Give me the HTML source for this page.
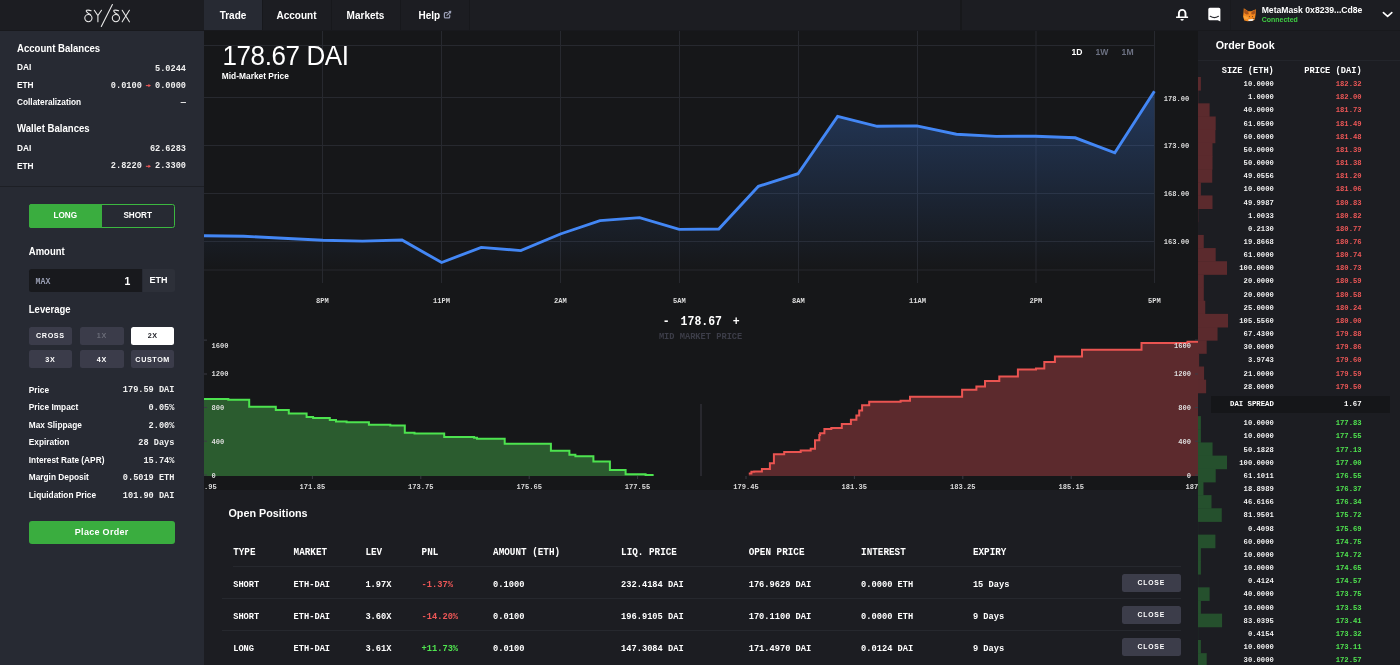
<!DOCTYPE html><html><head><meta charset="utf-8"><style>
html,body{margin:0;padding:0;width:1400px;height:665px;overflow:hidden;background:#18191c;}
.t{position:absolute;white-space:nowrap;line-height:1;}
#tx{position:absolute;left:0;top:0;width:1400px;height:665px;will-change:transform;}
.r{position:absolute;}
svg{position:absolute;left:0;top:0;}
</style></head><body>
<div class="r" style="left:0px;top:0px;width:1400px;height:30px;background:#1c1d22;"></div>
<div class="r" style="left:0px;top:30px;width:1400px;height:1px;background:#18191d;"></div>
<div class="r" style="left:204px;top:0px;width:58px;height:30px;background:#272a33;"></div>
<div class="r" style="left:262px;top:0px;width:1px;height:30px;background:#17181c;"></div>
<div class="r" style="left:331px;top:0px;width:1px;height:30px;background:#17181c;"></div>
<div class="r" style="left:400px;top:0px;width:1px;height:30px;background:#17181c;"></div>
<div class="r" style="left:469px;top:0px;width:1px;height:30px;background:#17181c;"></div>
<div class="r" style="left:1230px;top:0px;width:1px;height:30px;background:#191a1e;"></div>
<div class="r" style="left:960px;top:0px;width:2px;height:30px;background:#17181b;"></div>
<div class="r" style="left:0px;top:31px;width:204px;height:634px;background:#272a33;"></div>
<div class="r" style="left:204px;top:31px;width:994px;height:459px;background:#161719;"></div>
<div class="r" style="left:204px;top:490px;width:994px;height:175px;background:#1c1d22;"></div>
<div class="r" style="left:1198px;top:31px;width:202px;height:634px;background:#1c1d22;"></div>
<div class="r" style="left:0px;top:185.5px;width:204px;height:1.5px;background:#1d1f25;"></div>
<svg width="1400" height="665" viewBox="0 0 1400 665">
<defs><linearGradient id="ag" gradientUnits="userSpaceOnUse" x1="0" y1="91" x2="0" y2="270">
<stop offset="0" stop-color="#4286f4" stop-opacity="0.30"/><stop offset="1" stop-color="#4286f4" stop-opacity="0.0"/></linearGradient></defs>
<line x1="204" y1="45.5" x2="1154.5" y2="45.5" stroke="#27292f" stroke-width="1"/>
<line x1="204" y1="97.5" x2="1154.5" y2="97.5" stroke="#27292f" stroke-width="1"/>
<line x1="204" y1="145.5" x2="1154.5" y2="145.5" stroke="#27292f" stroke-width="1"/>
<line x1="204" y1="193.5" x2="1154.5" y2="193.5" stroke="#27292f" stroke-width="1"/>
<line x1="204" y1="241.5" x2="1154.5" y2="241.5" stroke="#27292f" stroke-width="1"/>
<line x1="204" y1="270" x2="1154.5" y2="270" stroke="#27292f" stroke-width="1"/>
<line x1="322.5" y1="31" x2="322.5" y2="283" stroke="#27292f" stroke-width="1"/>
<line x1="441.5" y1="31" x2="441.5" y2="283" stroke="#27292f" stroke-width="1"/>
<line x1="560.5" y1="31" x2="560.5" y2="283" stroke="#27292f" stroke-width="1"/>
<line x1="679.5" y1="31" x2="679.5" y2="283" stroke="#27292f" stroke-width="1"/>
<line x1="798.5" y1="31" x2="798.5" y2="283" stroke="#27292f" stroke-width="1"/>
<line x1="917.5" y1="31" x2="917.5" y2="283" stroke="#27292f" stroke-width="1"/>
<line x1="1036" y1="31" x2="1036" y2="283" stroke="#27292f" stroke-width="1"/>
<line x1="1154.5" y1="31" x2="1154.5" y2="283" stroke="#27292f" stroke-width="1"/>
<path d="M204.0,235.7 L243.6,236.3 L283.2,238.2 L322.8,240.2 L362.4,241.1 L402.0,240.0 L441.6,262.5 L481.2,247.4 L520.8,250.6 L560.4,234.0 L600.0,220.6 L639.6,217.6 L679.2,229.4 L718.8,229.0 L758.4,186.3 L798.0,173.7 L837.6,116.4 L877.2,126.3 L916.8,125.9 L956.4,134.2 L996.0,136.4 L1035.6,136.2 L1075.2,137.8 L1114.8,152.8 L1154.4,91.2 L1154.4,270 L204,270 Z" fill="url(#ag)"/>
<path d="M204.0,235.7 L243.6,236.3 L283.2,238.2 L322.8,240.2 L362.4,241.1 L402.0,240.0 L441.6,262.5 L481.2,247.4 L520.8,250.6 L560.4,234.0 L600.0,220.6 L639.6,217.6 L679.2,229.4 L718.8,229.0 L758.4,186.3 L798.0,173.7 L837.6,116.4 L877.2,126.3 L916.8,125.9 L956.4,134.2 L996.0,136.4 L1035.6,136.2 L1075.2,137.8 L1114.8,152.8 L1154.4,91.2" fill="none" stroke="#4387f5" stroke-width="2.9" stroke-linejoin="miter"/>
<path d="M204,398.9 H228.3 V399.8 H249.2 V406.8 H275.8 V410.1 H288.8 V413.5 H306.6 V417.1 H313.1 V418.0 H329.8 V420.0 H336.0 V421.4 H346.6 V422.2 H368.9 V424.7 H390.3 V425.6 H398.8 V425.6 H404.8 V432.7 H414.5 V433.5 H444.2 V436.9 H469.9 V437.0 H474.1 V437.8 H477.0 V438.7 H504.7 V443.8 H532.3 V443.8 H550.9 V450.8 H569.4 V454.7 H575.4 V456.3 H593.4 V461.5 H609.9 V470.0 H625.6 V474.3 H645.6 V475.1 H653.6 V476 H204 Z" fill="#2b5c2f"/>
<path d="M204,398.9 H228.3 V399.8 H249.2 V406.8 H275.8 V410.1 H288.8 V413.5 H306.6 V417.1 H313.1 V418.0 H329.8 V420.0 H336.0 V421.4 H346.6 V422.2 H368.9 V424.7 H390.3 V425.6 H398.8 V425.6 H404.8 V432.7 H414.5 V433.5 H444.2 V436.9 H469.9 V437.0 H474.1 V437.8 H477.0 V438.7 H504.7 V443.8 H532.3 V443.8 H550.9 V450.8 H569.4 V454.7 H575.4 V456.3 H593.4 V461.5 H609.9 V470.0 H625.6 V474.3 H645.6 V475.1 H653.6" fill="none" stroke="#4de34f" stroke-width="2"/>
<path d="M748.8,473.6 H751.4 V471.8 H754.2 V471.5 H761.9 V468.9 H769.9 V463.2 H773.9 V454.2 H784.2 V452.1 H800.7 V450.4 H810.7 V448.7 H815.0 V440.2 H819.3 V435.0 H820.1 V433.3 H821.0 V433.3 H822.7 V433.2 H824.4 V429.0 H831.3 V428.1 H841.8 V424.0 H850.9 V419.7 H856.4 V415.5 H859.2 V410.4 H862.1 V405.2 H869.2 V401.8 H883.8 V401.7 H900.6 V400.8 H910.0 V396.7 H962.1 V389.7 H976.4 V386.4 H985.0 V381.0 H999.3 V376.4 H1017.9 V369.6 H1036.0 V368.6 H1044.3 V362.0 H1054.9 V356.5 H1082.0 V349.8 H1141.5 V343.0 H1187.5 V341.7 H1198 V476 H748.8 Z" fill="#5c2a2d"/>
<path d="M748.8,473.6 H751.4 V471.8 H754.2 V471.5 H761.9 V468.9 H769.9 V463.2 H773.9 V454.2 H784.2 V452.1 H800.7 V450.4 H810.7 V448.7 H815.0 V440.2 H819.3 V435.0 H820.1 V433.3 H821.0 V433.3 H822.7 V433.2 H824.4 V429.0 H831.3 V428.1 H841.8 V424.0 H850.9 V419.7 H856.4 V415.5 H859.2 V410.4 H862.1 V405.2 H869.2 V401.8 H883.8 V401.7 H900.6 V400.8 H910.0 V396.7 H962.1 V389.7 H976.4 V386.4 H985.0 V381.0 H999.3 V376.4 H1017.9 V369.6 H1036.0 V368.6 H1044.3 V362.0 H1054.9 V356.5 H1082.0 V349.8 H1141.5 V343.0 H1187.5 V341.7 H1198" fill="none" stroke="#ea5451" stroke-width="2"/>
<line x1="204" y1="340.1" x2="207" y2="340.1" stroke="#3a3b44" stroke-width="1"/>
<line x1="1195" y1="340.1" x2="1198" y2="340.1" stroke="#3a3b44" stroke-width="1"/>
<line x1="204" y1="374" x2="207" y2="374" stroke="#3a3b44" stroke-width="1"/>
<line x1="1195" y1="374" x2="1198" y2="374" stroke="#3a3b44" stroke-width="1"/>
<line x1="204" y1="407.5" x2="207" y2="407.5" stroke="#3a3b44" stroke-width="1"/>
<line x1="1195" y1="407.5" x2="1198" y2="407.5" stroke="#3a3b44" stroke-width="1"/>
<line x1="204" y1="441.2" x2="207" y2="441.2" stroke="#3a3b44" stroke-width="1"/>
<line x1="1195" y1="441.2" x2="1198" y2="441.2" stroke="#3a3b44" stroke-width="1"/>
<line x1="204" y1="475" x2="207" y2="475" stroke="#3a3b44" stroke-width="1"/>
<line x1="1195" y1="475" x2="1198" y2="475" stroke="#3a3b44" stroke-width="1"/>
<line x1="701" y1="404" x2="701" y2="476" stroke="#3a3b44" stroke-width="1"/>
<line x1="312.4" y1="476" x2="312.4" y2="479" stroke="#3a3b44" stroke-width="1"/>
<line x1="420.8" y1="476" x2="420.8" y2="479" stroke="#3a3b44" stroke-width="1"/>
<line x1="529.2" y1="476" x2="529.2" y2="479" stroke="#3a3b44" stroke-width="1"/>
<line x1="637.6" y1="476" x2="637.6" y2="479" stroke="#3a3b44" stroke-width="1"/>
<line x1="746.0" y1="476" x2="746.0" y2="479" stroke="#3a3b44" stroke-width="1"/>
<line x1="854.4" y1="476" x2="854.4" y2="479" stroke="#3a3b44" stroke-width="1"/>
<line x1="962.8" y1="476" x2="962.8" y2="479" stroke="#3a3b44" stroke-width="1"/>
<line x1="1071.2" y1="476" x2="1071.2" y2="479" stroke="#3a3b44" stroke-width="1"/>
<rect x="1198" y="77.00" width="2.90" height="13.6" fill="#5b2a2d"/>
<rect x="1198" y="90.16" width="0.29" height="13.6" fill="#5b2a2d"/>
<rect x="1198" y="103.32" width="11.60" height="13.6" fill="#5b2a2d"/>
<rect x="1198" y="116.48" width="17.70" height="13.6" fill="#5b2a2d"/>
<rect x="1198" y="129.64" width="17.40" height="13.6" fill="#5b2a2d"/>
<rect x="1198" y="142.80" width="14.50" height="13.6" fill="#5b2a2d"/>
<rect x="1198" y="155.96" width="14.50" height="13.6" fill="#5b2a2d"/>
<rect x="1198" y="169.12" width="14.23" height="13.6" fill="#5b2a2d"/>
<rect x="1198" y="182.28" width="2.90" height="13.6" fill="#5b2a2d"/>
<rect x="1198" y="195.44" width="14.50" height="13.6" fill="#5b2a2d"/>
<rect x="1198" y="208.60" width="0.29" height="13.6" fill="#5b2a2d"/>
<rect x="1198" y="221.76" width="0.06" height="13.6" fill="#5b2a2d"/>
<rect x="1198" y="234.92" width="5.76" height="13.6" fill="#5b2a2d"/>
<rect x="1198" y="248.08" width="17.69" height="13.6" fill="#5b2a2d"/>
<rect x="1198" y="261.24" width="29.00" height="13.6" fill="#5b2a2d"/>
<rect x="1198" y="274.40" width="5.80" height="13.6" fill="#5b2a2d"/>
<rect x="1198" y="287.56" width="5.80" height="13.6" fill="#5b2a2d"/>
<rect x="1198" y="300.72" width="7.25" height="13.6" fill="#5b2a2d"/>
<rect x="1198" y="313.88" width="30.00" height="13.6" fill="#5b2a2d"/>
<rect x="1198" y="327.04" width="19.55" height="13.6" fill="#5b2a2d"/>
<rect x="1198" y="340.20" width="8.70" height="13.6" fill="#5b2a2d"/>
<rect x="1198" y="353.36" width="1.15" height="13.6" fill="#5b2a2d"/>
<rect x="1198" y="366.52" width="6.09" height="13.6" fill="#5b2a2d"/>
<rect x="1198" y="379.68" width="8.12" height="13.6" fill="#5b2a2d"/>
<rect x="1198" y="416.10" width="2.90" height="13.6" fill="#25502d"/>
<rect x="1198" y="429.27" width="2.90" height="13.6" fill="#25502d"/>
<rect x="1198" y="442.44" width="14.55" height="13.6" fill="#25502d"/>
<rect x="1198" y="455.61" width="29.00" height="13.6" fill="#25502d"/>
<rect x="1198" y="468.78" width="17.72" height="13.6" fill="#25502d"/>
<rect x="1198" y="481.95" width="5.48" height="13.6" fill="#25502d"/>
<rect x="1198" y="495.12" width="13.52" height="13.6" fill="#25502d"/>
<rect x="1198" y="508.29" width="23.77" height="13.6" fill="#25502d"/>
<rect x="1198" y="521.46" width="0.12" height="13.6" fill="#25502d"/>
<rect x="1198" y="534.63" width="17.40" height="13.6" fill="#25502d"/>
<rect x="1198" y="547.80" width="2.90" height="13.6" fill="#25502d"/>
<rect x="1198" y="560.97" width="2.90" height="13.6" fill="#25502d"/>
<rect x="1198" y="574.14" width="0.12" height="13.6" fill="#25502d"/>
<rect x="1198" y="587.31" width="11.60" height="13.6" fill="#25502d"/>
<rect x="1198" y="600.48" width="2.90" height="13.6" fill="#25502d"/>
<rect x="1198" y="613.65" width="24.08" height="13.6" fill="#25502d"/>
<rect x="1198" y="626.82" width="0.12" height="13.6" fill="#25502d"/>
<rect x="1198" y="639.99" width="2.90" height="13.6" fill="#25502d"/>
<rect x="1198" y="653.16" width="8.70" height="13.6" fill="#25502d"/>
</svg>
<div id="tx">
<div class="t" style="top:10.54px;font-size:10px;color:#ffffff;font-weight:bold;font-family:'Liberation Sans', sans-serif;transform:scaleY(1.06);transform-origin:0 8.46px;left:-67.00px;width:600px;text-align:center;">Trade</div>
<div class="t" style="top:10.54px;font-size:10px;color:#ffffff;font-weight:bold;font-family:'Liberation Sans', sans-serif;transform:scaleY(1.06);transform-origin:0 8.46px;left:-3.50px;width:600px;text-align:center;">Account</div>
<div class="t" style="top:10.54px;font-size:10px;color:#ffffff;font-weight:bold;font-family:'Liberation Sans', sans-serif;transform:scaleY(1.06);transform-origin:0 8.46px;left:65.50px;width:600px;text-align:center;">Markets</div>
<div class="t" style="top:10.54px;font-size:10px;color:#ffffff;font-weight:bold;font-family:'Liberation Sans', sans-serif;transform:scaleY(1.06);transform-origin:0 8.46px;left:418.50px;">Help</div>
<div class="t" style="top:43.57px;font-size:9.6px;color:#ffffff;font-weight:bold;font-family:'Liberation Sans', sans-serif;transform:scaleY(1.06);transform-origin:0 8.13px;left:17.00px;">Account Balances</div>
<div class="t" style="top:63.47px;font-size:8.3px;color:#ffffff;font-weight:bold;font-family:'Liberation Sans', sans-serif;transform:scaleY(1.06);transform-origin:0 7.03px;left:17.00px;">DAI</div>
<div class="t" style="top:80.97px;font-size:8.3px;color:#ffffff;font-weight:bold;font-family:'Liberation Sans', sans-serif;transform:scaleY(1.06);transform-origin:0 7.03px;left:17.00px;">ETH</div>
<div class="t" style="top:98.47px;font-size:8.3px;color:#ffffff;font-weight:bold;font-family:'Liberation Sans', sans-serif;transform:scaleY(1.06);transform-origin:0 7.03px;left:17.00px;">Collateralization</div>
<div class="t" style="top:64.51px;font-size:8.6px;color:#f0f0f0;font-weight:bold;font-family:'Liberation Mono', monospace;transform:scaleY(1.1);transform-origin:0 6.59px;right:1214.00px;text-align:right;">5.0244</div>
<div class="t" style="top:82.01px;font-size:8.6px;color:#f0f0f0;font-weight:bold;font-family:'Liberation Mono', monospace;transform:scaleY(1.1);transform-origin:0 6.59px;right:1214.00px;text-align:right;">0.0000</div>
<div class="t" style="top:82.01px;font-size:8.6px;color:#f0f0f0;font-weight:bold;font-family:'Liberation Mono', monospace;transform:scaleY(1.1);transform-origin:0 6.59px;right:1258.20px;text-align:right;">0.0100</div>
<div class="t" style="top:98.91px;font-size:8.6px;color:#f0f0f0;font-weight:bold;font-family:'Liberation Mono', monospace;transform:scaleY(1.1);transform-origin:0 6.59px;right:1214.00px;text-align:right;">&#8212;</div>
<div class="t" style="top:123.87px;font-size:9.6px;color:#ffffff;font-weight:bold;font-family:'Liberation Sans', sans-serif;transform:scaleY(1.06);transform-origin:0 8.13px;left:17.00px;">Wallet Balances</div>
<div class="t" style="top:143.97px;font-size:8.3px;color:#ffffff;font-weight:bold;font-family:'Liberation Sans', sans-serif;transform:scaleY(1.06);transform-origin:0 7.03px;left:17.00px;">DAI</div>
<div class="t" style="top:161.57px;font-size:8.3px;color:#ffffff;font-weight:bold;font-family:'Liberation Sans', sans-serif;transform:scaleY(1.06);transform-origin:0 7.03px;left:17.00px;">ETH</div>
<div class="t" style="top:144.71px;font-size:8.6px;color:#f0f0f0;font-weight:bold;font-family:'Liberation Mono', monospace;transform:scaleY(1.1);transform-origin:0 6.59px;right:1214.00px;text-align:right;">62.6283</div>
<div class="t" style="top:162.21px;font-size:8.6px;color:#f0f0f0;font-weight:bold;font-family:'Liberation Mono', monospace;transform:scaleY(1.1);transform-origin:0 6.59px;right:1214.00px;text-align:right;">2.3300</div>
<div class="t" style="top:162.21px;font-size:8.6px;color:#f0f0f0;font-weight:bold;font-family:'Liberation Mono', monospace;transform:scaleY(1.1);transform-origin:0 6.59px;right:1258.20px;text-align:right;">2.8220</div>
<div class="r" style="left:28.5px;top:204px;width:144.5px;height:21.5px;border:1px solid #3cb840;border-radius:2.5px;"></div>
<div class="r" style="left:28.5px;top:204px;width:73px;height:23.5px;background:#3aad3f;border-radius:2.5px 0 0 2.5px;"></div>
<div class="t" style="top:211.96px;font-size:8.2px;color:#ffffff;font-weight:bold;font-family:'Liberation Sans', sans-serif;transform:scaleY(1.06);transform-origin:0 6.94px;left:-234.70px;width:600px;text-align:center;">LONG</div>
<div class="t" style="top:211.96px;font-size:8.2px;color:#ffffff;font-weight:bold;font-family:'Liberation Sans', sans-serif;transform:scaleY(1.06);transform-origin:0 6.94px;left:-162.30px;width:600px;text-align:center;">SHORT</div>
<div class="t" style="top:246.96px;font-size:9.5px;color:#ffffff;font-weight:bold;font-family:'Liberation Sans', sans-serif;transform:scaleY(1.06);transform-origin:0 8.04px;left:28.80px;">Amount</div>
<div class="r" style="left:28.8px;top:268.8px;width:113.7px;height:22.8px;background:#18191d;border-radius:2.5px 0 0 2.5px;"></div>
<div class="r" style="left:142.5px;top:268.8px;width:32.1px;height:22.8px;background:#2d3039;border-radius:0 2.5px 2.5px 0;"></div>
<div class="t" style="top:277.72px;font-size:8.2px;color:#9a9fb4;font-weight:bold;font-family:'Liberation Mono', monospace;transform:scaleY(1.1);transform-origin:0 6.28px;left:35.60px;">MAX</div>
<div class="t" style="top:276.11px;font-size:10.5px;color:#ffffff;font-weight:bold;font-family:'Liberation Sans', sans-serif;transform:scaleY(1.06);transform-origin:0 8.89px;right:1269.70px;text-align:right;">1</div>
<div class="t" style="top:276.18px;font-size:9px;color:#ffffff;font-weight:bold;font-family:'Liberation Sans', sans-serif;transform:scaleY(1.06);transform-origin:0 7.62px;left:-141.40px;width:600px;text-align:center;">ETH</div>
<div class="t" style="top:305.46px;font-size:9.5px;color:#ffffff;font-weight:bold;font-family:'Liberation Sans', sans-serif;transform:scaleY(1.06);transform-origin:0 8.04px;left:28.80px;">Leverage</div>
<div class="r" style="left:28.5px;top:327.1px;width:43.7px;height:17.8px;background:#3b3c4a;border-radius:2.5px;"></div>
<div class="t" style="top:332.31px;font-size:7.2px;color:#ffffff;font-weight:bold;font-family:'Liberation Sans', sans-serif;transform:scaleY(1.06);transform-origin:0 6.09px;letter-spacing:0.6px;left:-249.65px;width:600px;text-align:center;">CROSS</div>
<div class="r" style="left:80px;top:327.1px;width:43.7px;height:17.8px;background:#3b3c4a;border-radius:2.5px;"></div>
<div class="t" style="top:332.31px;font-size:7.2px;color:#6a6c78;font-weight:bold;font-family:'Liberation Sans', sans-serif;transform:scaleY(1.06);transform-origin:0 6.09px;letter-spacing:0.6px;left:-198.15px;width:600px;text-align:center;">1X</div>
<div class="r" style="left:130.8px;top:327.1px;width:43.7px;height:17.8px;background:#ffffff;border-radius:2.5px;"></div>
<div class="t" style="top:332.31px;font-size:7.2px;color:#22232a;font-weight:bold;font-family:'Liberation Sans', sans-serif;transform:scaleY(1.06);transform-origin:0 6.09px;letter-spacing:0.6px;left:-147.35px;width:600px;text-align:center;">2X</div>
<div class="r" style="left:28.5px;top:350.4px;width:43.7px;height:17.8px;background:#3b3c4a;border-radius:2.5px;"></div>
<div class="t" style="top:355.61px;font-size:7.2px;color:#ffffff;font-weight:bold;font-family:'Liberation Sans', sans-serif;transform:scaleY(1.06);transform-origin:0 6.09px;letter-spacing:0.6px;left:-249.65px;width:600px;text-align:center;">3X</div>
<div class="r" style="left:80px;top:350.4px;width:43.7px;height:17.8px;background:#3b3c4a;border-radius:2.5px;"></div>
<div class="t" style="top:355.61px;font-size:7.2px;color:#ffffff;font-weight:bold;font-family:'Liberation Sans', sans-serif;transform:scaleY(1.06);transform-origin:0 6.09px;letter-spacing:0.6px;left:-198.15px;width:600px;text-align:center;">4X</div>
<div class="r" style="left:130.8px;top:350.4px;width:43.7px;height:17.8px;background:#3b3c4a;border-radius:2.5px;"></div>
<div class="t" style="top:355.61px;font-size:7.2px;color:#ffffff;font-weight:bold;font-family:'Liberation Sans', sans-serif;transform:scaleY(1.06);transform-origin:0 6.09px;letter-spacing:0.6px;left:-147.35px;width:600px;text-align:center;">CUSTOM</div>
<div class="t" style="top:385.57px;font-size:8.3px;color:#ffffff;font-weight:bold;font-family:'Liberation Sans', sans-serif;transform:scaleY(1.06);transform-origin:0 7.03px;left:28.80px;">Price</div>
<div class="t" style="top:386.41px;font-size:8.6px;color:#f0f0f0;font-weight:bold;font-family:'Liberation Mono', monospace;transform:scaleY(1.1);transform-origin:0 6.59px;right:1225.60px;text-align:right;">179.59 DAI</div>
<div class="t" style="top:403.17px;font-size:8.3px;color:#ffffff;font-weight:bold;font-family:'Liberation Sans', sans-serif;transform:scaleY(1.06);transform-origin:0 7.03px;left:28.80px;">Price Impact</div>
<div class="t" style="top:404.01px;font-size:8.6px;color:#f0f0f0;font-weight:bold;font-family:'Liberation Mono', monospace;transform:scaleY(1.1);transform-origin:0 6.59px;right:1225.60px;text-align:right;">0.05%</div>
<div class="t" style="top:420.97px;font-size:8.3px;color:#ffffff;font-weight:bold;font-family:'Liberation Sans', sans-serif;transform:scaleY(1.06);transform-origin:0 7.03px;left:28.80px;">Max Slippage</div>
<div class="t" style="top:421.81px;font-size:8.6px;color:#f0f0f0;font-weight:bold;font-family:'Liberation Mono', monospace;transform:scaleY(1.1);transform-origin:0 6.59px;right:1225.60px;text-align:right;">2.00%</div>
<div class="t" style="top:438.27px;font-size:8.3px;color:#ffffff;font-weight:bold;font-family:'Liberation Sans', sans-serif;transform:scaleY(1.06);transform-origin:0 7.03px;left:28.80px;">Expiration</div>
<div class="t" style="top:439.11px;font-size:8.6px;color:#f0f0f0;font-weight:bold;font-family:'Liberation Mono', monospace;transform:scaleY(1.1);transform-origin:0 6.59px;right:1225.60px;text-align:right;">28 Days</div>
<div class="t" style="top:455.87px;font-size:8.3px;color:#ffffff;font-weight:bold;font-family:'Liberation Sans', sans-serif;transform:scaleY(1.06);transform-origin:0 7.03px;left:28.80px;">Interest Rate (APR)</div>
<div class="t" style="top:456.71px;font-size:8.6px;color:#f0f0f0;font-weight:bold;font-family:'Liberation Mono', monospace;transform:scaleY(1.1);transform-origin:0 6.59px;right:1225.60px;text-align:right;">15.74%</div>
<div class="t" style="top:473.37px;font-size:8.3px;color:#ffffff;font-weight:bold;font-family:'Liberation Sans', sans-serif;transform:scaleY(1.06);transform-origin:0 7.03px;left:28.80px;">Margin Deposit</div>
<div class="t" style="top:474.21px;font-size:8.6px;color:#f0f0f0;font-weight:bold;font-family:'Liberation Mono', monospace;transform:scaleY(1.1);transform-origin:0 6.59px;right:1225.60px;text-align:right;">0.5019 ETH</div>
<div class="t" style="top:490.87px;font-size:8.3px;color:#ffffff;font-weight:bold;font-family:'Liberation Sans', sans-serif;transform:scaleY(1.06);transform-origin:0 7.03px;left:28.80px;">Liquidation Price</div>
<div class="t" style="top:491.71px;font-size:8.6px;color:#f0f0f0;font-weight:bold;font-family:'Liberation Mono', monospace;transform:scaleY(1.1);transform-origin:0 6.59px;right:1225.60px;text-align:right;">101.90 DAI</div>
<div class="r" style="left:28.8px;top:520.8px;width:145.8px;height:23.4px;background:#3aad3f;border-radius:3px;"></div>
<div class="t" style="top:527.98px;font-size:9px;color:#ffffff;font-weight:bold;font-family:'Liberation Sans', sans-serif;transform:scaleY(1.06);transform-origin:0 7.62px;letter-spacing:0.3px;left:-198.30px;width:600px;text-align:center;">Place Order</div>
<div style="position:absolute;left:0;top:0;width:1400px;height:665px;clip-path:inset(31px 202px 175px 204px)">
<div class="t" style="top:42.79px;font-size:26px;color:#ffffff;font-weight:normal;font-family:'Liberation Sans', sans-serif;transform:scaleY(1.06);transform-origin:0 22.01px;letter-spacing:-0.4px;left:222.50px;">178.67 DAI</div>
<div class="t" style="top:71.59px;font-size:8.4px;color:#ffffff;font-weight:bold;font-family:'Liberation Sans', sans-serif;transform:scaleY(1.06);transform-origin:0 7.11px;left:221.80px;">Mid-Market Price</div>
<div class="t" style="top:48.42px;font-size:8.6px;color:#ffffff;font-weight:bold;font-family:'Liberation Sans', sans-serif;transform:scaleY(1.06);transform-origin:0 7.28px;left:777.00px;width:600px;text-align:center;">1D</div>
<div class="t" style="top:48.42px;font-size:8.6px;color:#6b7081;font-weight:bold;font-family:'Liberation Sans', sans-serif;transform:scaleY(1.06);transform-origin:0 7.28px;left:802.00px;width:600px;text-align:center;">1W</div>
<div class="t" style="top:48.42px;font-size:8.6px;color:#6b7081;font-weight:bold;font-family:'Liberation Sans', sans-serif;transform:scaleY(1.06);transform-origin:0 7.28px;left:827.60px;width:600px;text-align:center;">1M</div>
<div class="t" style="top:95.76px;font-size:7.1px;color:#dcdcdc;font-weight:bold;font-family:'Liberation Mono', monospace;transform:scaleY(1.1);transform-origin:0 5.44px;left:876.50px;width:600px;text-align:center;">178.00</div>
<div class="t" style="top:143.26px;font-size:7.1px;color:#dcdcdc;font-weight:bold;font-family:'Liberation Mono', monospace;transform:scaleY(1.1);transform-origin:0 5.44px;left:876.50px;width:600px;text-align:center;">173.00</div>
<div class="t" style="top:191.06px;font-size:7.1px;color:#dcdcdc;font-weight:bold;font-family:'Liberation Mono', monospace;transform:scaleY(1.1);transform-origin:0 5.44px;left:876.50px;width:600px;text-align:center;">168.00</div>
<div class="t" style="top:239.06px;font-size:7.1px;color:#dcdcdc;font-weight:bold;font-family:'Liberation Mono', monospace;transform:scaleY(1.1);transform-origin:0 5.44px;left:876.50px;width:600px;text-align:center;">163.00</div>
<div class="t" style="top:297.56px;font-size:7.1px;color:#dcdcdc;font-weight:bold;font-family:'Liberation Mono', monospace;transform:scaleY(1.1);transform-origin:0 5.44px;left:22.50px;width:600px;text-align:center;">8PM</div>
<div class="t" style="top:297.56px;font-size:7.1px;color:#dcdcdc;font-weight:bold;font-family:'Liberation Mono', monospace;transform:scaleY(1.1);transform-origin:0 5.44px;left:141.50px;width:600px;text-align:center;">11PM</div>
<div class="t" style="top:297.56px;font-size:7.1px;color:#dcdcdc;font-weight:bold;font-family:'Liberation Mono', monospace;transform:scaleY(1.1);transform-origin:0 5.44px;left:260.50px;width:600px;text-align:center;">2AM</div>
<div class="t" style="top:297.56px;font-size:7.1px;color:#dcdcdc;font-weight:bold;font-family:'Liberation Mono', monospace;transform:scaleY(1.1);transform-origin:0 5.44px;left:379.50px;width:600px;text-align:center;">5AM</div>
<div class="t" style="top:297.56px;font-size:7.1px;color:#dcdcdc;font-weight:bold;font-family:'Liberation Mono', monospace;transform:scaleY(1.1);transform-origin:0 5.44px;left:498.50px;width:600px;text-align:center;">8AM</div>
<div class="t" style="top:297.56px;font-size:7.1px;color:#dcdcdc;font-weight:bold;font-family:'Liberation Mono', monospace;transform:scaleY(1.1);transform-origin:0 5.44px;left:617.50px;width:600px;text-align:center;">11AM</div>
<div class="t" style="top:297.56px;font-size:7.1px;color:#dcdcdc;font-weight:bold;font-family:'Liberation Mono', monospace;transform:scaleY(1.1);transform-origin:0 5.44px;left:736.00px;width:600px;text-align:center;">2PM</div>
<div class="t" style="top:297.56px;font-size:7.1px;color:#dcdcdc;font-weight:bold;font-family:'Liberation Mono', monospace;transform:scaleY(1.1);transform-origin:0 5.44px;left:854.50px;width:600px;text-align:center;">5PM</div>
<div class="t" style="top:316.09px;font-size:11.5px;color:#ffffff;font-weight:bold;font-family:'Liberation Mono', monospace;transform:scaleY(1.1);transform-origin:0 8.81px;left:366.30px;width:600px;text-align:center;">-</div>
<div class="t" style="top:316.09px;font-size:11.5px;color:#ffffff;font-weight:bold;font-family:'Liberation Mono', monospace;transform:scaleY(1.1);transform-origin:0 8.81px;left:401.30px;width:600px;text-align:center;">178.67</div>
<div class="t" style="top:316.09px;font-size:11.5px;color:#ffffff;font-weight:bold;font-family:'Liberation Mono', monospace;transform:scaleY(1.1);transform-origin:0 8.81px;left:436.20px;width:600px;text-align:center;">+</div>
<div class="t" style="top:333.13px;font-size:8.7px;color:#3c3d48;font-weight:bold;font-family:'Liberation Mono', monospace;transform:scaleY(1.1);transform-origin:0 6.67px;left:400.60px;width:600px;text-align:center;">MID MARKET PRICE</div>
<div class="t" style="top:343.26px;font-size:7.1px;color:#dcdcdc;font-weight:bold;font-family:'Liberation Mono', monospace;transform:scaleY(1.1);transform-origin:0 5.44px;left:211.50px;">1600</div>
<div class="t" style="top:343.26px;font-size:7.1px;color:#dcdcdc;font-weight:bold;font-family:'Liberation Mono', monospace;transform:scaleY(1.1);transform-origin:0 5.44px;right:209.00px;text-align:right;">1600</div>
<div class="t" style="top:371.26px;font-size:7.1px;color:#dcdcdc;font-weight:bold;font-family:'Liberation Mono', monospace;transform:scaleY(1.1);transform-origin:0 5.44px;left:211.50px;">1200</div>
<div class="t" style="top:371.26px;font-size:7.1px;color:#dcdcdc;font-weight:bold;font-family:'Liberation Mono', monospace;transform:scaleY(1.1);transform-origin:0 5.44px;right:209.00px;text-align:right;">1200</div>
<div class="t" style="top:405.06px;font-size:7.1px;color:#dcdcdc;font-weight:bold;font-family:'Liberation Mono', monospace;transform:scaleY(1.1);transform-origin:0 5.44px;left:211.50px;">800</div>
<div class="t" style="top:405.06px;font-size:7.1px;color:#dcdcdc;font-weight:bold;font-family:'Liberation Mono', monospace;transform:scaleY(1.1);transform-origin:0 5.44px;right:209.00px;text-align:right;">800</div>
<div class="t" style="top:439.26px;font-size:7.1px;color:#dcdcdc;font-weight:bold;font-family:'Liberation Mono', monospace;transform:scaleY(1.1);transform-origin:0 5.44px;left:211.50px;">400</div>
<div class="t" style="top:439.26px;font-size:7.1px;color:#dcdcdc;font-weight:bold;font-family:'Liberation Mono', monospace;transform:scaleY(1.1);transform-origin:0 5.44px;right:209.00px;text-align:right;">400</div>
<div class="t" style="top:473.06px;font-size:7.1px;color:#dcdcdc;font-weight:bold;font-family:'Liberation Mono', monospace;transform:scaleY(1.1);transform-origin:0 5.44px;left:211.50px;">0</div>
<div class="t" style="top:473.06px;font-size:7.1px;color:#dcdcdc;font-weight:bold;font-family:'Liberation Mono', monospace;transform:scaleY(1.1);transform-origin:0 5.44px;right:209.00px;text-align:right;">0</div>
<div class="t" style="top:484.26px;font-size:7.1px;color:#dcdcdc;font-weight:bold;font-family:'Liberation Mono', monospace;transform:scaleY(1.1);transform-origin:0 5.44px;left:-96.00px;width:600px;text-align:center;">169.95</div>
<div class="t" style="top:484.26px;font-size:7.1px;color:#dcdcdc;font-weight:bold;font-family:'Liberation Mono', monospace;transform:scaleY(1.1);transform-origin:0 5.44px;left:12.40px;width:600px;text-align:center;">171.85</div>
<div class="t" style="top:484.26px;font-size:7.1px;color:#dcdcdc;font-weight:bold;font-family:'Liberation Mono', monospace;transform:scaleY(1.1);transform-origin:0 5.44px;left:120.79px;width:600px;text-align:center;">173.75</div>
<div class="t" style="top:484.26px;font-size:7.1px;color:#dcdcdc;font-weight:bold;font-family:'Liberation Mono', monospace;transform:scaleY(1.1);transform-origin:0 5.44px;left:229.19px;width:600px;text-align:center;">175.65</div>
<div class="t" style="top:484.26px;font-size:7.1px;color:#dcdcdc;font-weight:bold;font-family:'Liberation Mono', monospace;transform:scaleY(1.1);transform-origin:0 5.44px;left:337.58px;width:600px;text-align:center;">177.55</div>
<div class="t" style="top:484.26px;font-size:7.1px;color:#dcdcdc;font-weight:bold;font-family:'Liberation Mono', monospace;transform:scaleY(1.1);transform-origin:0 5.44px;left:445.98px;width:600px;text-align:center;">179.45</div>
<div class="t" style="top:484.26px;font-size:7.1px;color:#dcdcdc;font-weight:bold;font-family:'Liberation Mono', monospace;transform:scaleY(1.1);transform-origin:0 5.44px;left:554.37px;width:600px;text-align:center;">181.35</div>
<div class="t" style="top:484.26px;font-size:7.1px;color:#dcdcdc;font-weight:bold;font-family:'Liberation Mono', monospace;transform:scaleY(1.1);transform-origin:0 5.44px;left:662.77px;width:600px;text-align:center;">183.25</div>
<div class="t" style="top:484.26px;font-size:7.1px;color:#dcdcdc;font-weight:bold;font-family:'Liberation Mono', monospace;transform:scaleY(1.1);transform-origin:0 5.44px;left:771.16px;width:600px;text-align:center;">185.15</div>
<div class="t" style="top:484.26px;font-size:7.1px;color:#dcdcdc;font-weight:bold;font-family:'Liberation Mono', monospace;transform:scaleY(1.1);transform-origin:0 5.44px;left:1185.40px;">187.05</div>
</div>
<div class="t" style="top:507.66px;font-size:10.8px;color:#ffffff;font-weight:bold;font-family:'Liberation Sans', sans-serif;transform:scaleY(1.06);transform-origin:0 9.14px;left:228.40px;">Open Positions</div>
<div class="t" style="top:547.88px;font-size:9.3px;color:#ffffff;font-weight:bold;font-family:'Liberation Mono', monospace;transform:scaleY(1.1);transform-origin:0 7.12px;left:233.20px;">TYPE</div>
<div class="t" style="top:547.88px;font-size:9.3px;color:#ffffff;font-weight:bold;font-family:'Liberation Mono', monospace;transform:scaleY(1.1);transform-origin:0 7.12px;left:293.60px;">MARKET</div>
<div class="t" style="top:547.88px;font-size:9.3px;color:#ffffff;font-weight:bold;font-family:'Liberation Mono', monospace;transform:scaleY(1.1);transform-origin:0 7.12px;left:365.40px;">LEV</div>
<div class="t" style="top:547.88px;font-size:9.3px;color:#ffffff;font-weight:bold;font-family:'Liberation Mono', monospace;transform:scaleY(1.1);transform-origin:0 7.12px;left:421.60px;">PNL</div>
<div class="t" style="top:547.88px;font-size:9.3px;color:#ffffff;font-weight:bold;font-family:'Liberation Mono', monospace;transform:scaleY(1.1);transform-origin:0 7.12px;left:493.10px;">AMOUNT (ETH)</div>
<div class="t" style="top:547.88px;font-size:9.3px;color:#ffffff;font-weight:bold;font-family:'Liberation Mono', monospace;transform:scaleY(1.1);transform-origin:0 7.12px;left:621.10px;">LIQ. PRICE</div>
<div class="t" style="top:547.88px;font-size:9.3px;color:#ffffff;font-weight:bold;font-family:'Liberation Mono', monospace;transform:scaleY(1.1);transform-origin:0 7.12px;left:748.70px;">OPEN PRICE</div>
<div class="t" style="top:547.88px;font-size:9.3px;color:#ffffff;font-weight:bold;font-family:'Liberation Mono', monospace;transform:scaleY(1.1);transform-origin:0 7.12px;left:861.10px;">INTEREST</div>
<div class="t" style="top:547.88px;font-size:9.3px;color:#ffffff;font-weight:bold;font-family:'Liberation Mono', monospace;transform:scaleY(1.1);transform-origin:0 7.12px;left:972.90px;">EXPIRY</div>
<div class="r" style="left:233px;top:566px;width:948px;height:1px;background:#26282e;"></div>
<div class="t" style="top:581.13px;font-size:8.7px;color:#ffffff;font-weight:bold;font-family:'Liberation Mono', monospace;transform:scaleY(1.1);transform-origin:0 6.67px;left:233.20px;">SHORT</div>
<div class="t" style="top:581.13px;font-size:8.7px;color:#ffffff;font-weight:bold;font-family:'Liberation Mono', monospace;transform:scaleY(1.1);transform-origin:0 6.67px;left:293.60px;">ETH-DAI</div>
<div class="t" style="top:581.13px;font-size:8.7px;color:#ffffff;font-weight:bold;font-family:'Liberation Mono', monospace;transform:scaleY(1.1);transform-origin:0 6.67px;left:365.40px;">1.97X</div>
<div class="t" style="top:581.13px;font-size:8.7px;color:#ee5757;font-weight:bold;font-family:'Liberation Mono', monospace;transform:scaleY(1.1);transform-origin:0 6.67px;left:421.60px;">-1.37%</div>
<div class="t" style="top:581.13px;font-size:8.7px;color:#ffffff;font-weight:bold;font-family:'Liberation Mono', monospace;transform:scaleY(1.1);transform-origin:0 6.67px;left:493.10px;">0.1000</div>
<div class="t" style="top:581.13px;font-size:8.7px;color:#ffffff;font-weight:bold;font-family:'Liberation Mono', monospace;transform:scaleY(1.1);transform-origin:0 6.67px;left:621.10px;">232.4184 DAI</div>
<div class="t" style="top:581.13px;font-size:8.7px;color:#ffffff;font-weight:bold;font-family:'Liberation Mono', monospace;transform:scaleY(1.1);transform-origin:0 6.67px;left:748.70px;">176.9629 DAI</div>
<div class="t" style="top:581.13px;font-size:8.7px;color:#ffffff;font-weight:bold;font-family:'Liberation Mono', monospace;transform:scaleY(1.1);transform-origin:0 6.67px;left:861.10px;">0.0000 ETH</div>
<div class="t" style="top:581.13px;font-size:8.7px;color:#ffffff;font-weight:bold;font-family:'Liberation Mono', monospace;transform:scaleY(1.1);transform-origin:0 6.67px;left:972.90px;">15 Days</div>
<div class="r" style="left:1122px;top:574.2px;width:58.7px;height:17.5px;background:#3c3d4a;border-radius:2.5px;"></div>
<div class="t" style="top:580.04px;font-size:6.8px;color:#ffffff;font-weight:bold;font-family:'Liberation Sans', sans-serif;transform:scaleY(1.06);transform-origin:0 5.76px;letter-spacing:0.8px;left:851.30px;width:600px;text-align:center;">CLOSE</div>
<div class="r" style="left:221.5px;top:598px;width:959.5px;height:1px;background:#26282e;"></div>
<div class="t" style="top:613.13px;font-size:8.7px;color:#ffffff;font-weight:bold;font-family:'Liberation Mono', monospace;transform:scaleY(1.1);transform-origin:0 6.67px;left:233.20px;">SHORT</div>
<div class="t" style="top:613.13px;font-size:8.7px;color:#ffffff;font-weight:bold;font-family:'Liberation Mono', monospace;transform:scaleY(1.1);transform-origin:0 6.67px;left:293.60px;">ETH-DAI</div>
<div class="t" style="top:613.13px;font-size:8.7px;color:#ffffff;font-weight:bold;font-family:'Liberation Mono', monospace;transform:scaleY(1.1);transform-origin:0 6.67px;left:365.40px;">3.60X</div>
<div class="t" style="top:613.13px;font-size:8.7px;color:#ee5757;font-weight:bold;font-family:'Liberation Mono', monospace;transform:scaleY(1.1);transform-origin:0 6.67px;left:421.60px;">-14.20%</div>
<div class="t" style="top:613.13px;font-size:8.7px;color:#ffffff;font-weight:bold;font-family:'Liberation Mono', monospace;transform:scaleY(1.1);transform-origin:0 6.67px;left:493.10px;">0.0100</div>
<div class="t" style="top:613.13px;font-size:8.7px;color:#ffffff;font-weight:bold;font-family:'Liberation Mono', monospace;transform:scaleY(1.1);transform-origin:0 6.67px;left:621.10px;">196.9105 DAI</div>
<div class="t" style="top:613.13px;font-size:8.7px;color:#ffffff;font-weight:bold;font-family:'Liberation Mono', monospace;transform:scaleY(1.1);transform-origin:0 6.67px;left:748.70px;">170.1100 DAI</div>
<div class="t" style="top:613.13px;font-size:8.7px;color:#ffffff;font-weight:bold;font-family:'Liberation Mono', monospace;transform:scaleY(1.1);transform-origin:0 6.67px;left:861.10px;">0.0000 ETH</div>
<div class="t" style="top:613.13px;font-size:8.7px;color:#ffffff;font-weight:bold;font-family:'Liberation Mono', monospace;transform:scaleY(1.1);transform-origin:0 6.67px;left:972.90px;">9 Days</div>
<div class="r" style="left:1122px;top:606.2px;width:58.7px;height:17.5px;background:#3c3d4a;border-radius:2.5px;"></div>
<div class="t" style="top:612.04px;font-size:6.8px;color:#ffffff;font-weight:bold;font-family:'Liberation Sans', sans-serif;transform:scaleY(1.06);transform-origin:0 5.76px;letter-spacing:0.8px;left:851.30px;width:600px;text-align:center;">CLOSE</div>
<div class="r" style="left:221.5px;top:630px;width:959.5px;height:1px;background:#26282e;"></div>
<div class="t" style="top:645.13px;font-size:8.7px;color:#ffffff;font-weight:bold;font-family:'Liberation Mono', monospace;transform:scaleY(1.1);transform-origin:0 6.67px;left:233.20px;">LONG</div>
<div class="t" style="top:645.13px;font-size:8.7px;color:#ffffff;font-weight:bold;font-family:'Liberation Mono', monospace;transform:scaleY(1.1);transform-origin:0 6.67px;left:293.60px;">ETH-DAI</div>
<div class="t" style="top:645.13px;font-size:8.7px;color:#ffffff;font-weight:bold;font-family:'Liberation Mono', monospace;transform:scaleY(1.1);transform-origin:0 6.67px;left:365.40px;">3.61X</div>
<div class="t" style="top:645.13px;font-size:8.7px;color:#50e650;font-weight:bold;font-family:'Liberation Mono', monospace;transform:scaleY(1.1);transform-origin:0 6.67px;left:421.60px;">+11.73%</div>
<div class="t" style="top:645.13px;font-size:8.7px;color:#ffffff;font-weight:bold;font-family:'Liberation Mono', monospace;transform:scaleY(1.1);transform-origin:0 6.67px;left:493.10px;">0.0100</div>
<div class="t" style="top:645.13px;font-size:8.7px;color:#ffffff;font-weight:bold;font-family:'Liberation Mono', monospace;transform:scaleY(1.1);transform-origin:0 6.67px;left:621.10px;">147.3084 DAI</div>
<div class="t" style="top:645.13px;font-size:8.7px;color:#ffffff;font-weight:bold;font-family:'Liberation Mono', monospace;transform:scaleY(1.1);transform-origin:0 6.67px;left:748.70px;">171.4970 DAI</div>
<div class="t" style="top:645.13px;font-size:8.7px;color:#ffffff;font-weight:bold;font-family:'Liberation Mono', monospace;transform:scaleY(1.1);transform-origin:0 6.67px;left:861.10px;">0.0124 DAI</div>
<div class="t" style="top:645.13px;font-size:8.7px;color:#ffffff;font-weight:bold;font-family:'Liberation Mono', monospace;transform:scaleY(1.1);transform-origin:0 6.67px;left:972.90px;">9 Days</div>
<div class="r" style="left:1122px;top:638.2px;width:58.7px;height:17.5px;background:#3c3d4a;border-radius:2.5px;"></div>
<div class="t" style="top:644.04px;font-size:6.8px;color:#ffffff;font-weight:bold;font-family:'Liberation Sans', sans-serif;transform:scaleY(1.06);transform-origin:0 5.76px;letter-spacing:0.8px;left:851.30px;width:600px;text-align:center;">CLOSE</div>
<div class="t" style="top:39.94px;font-size:10.7px;color:#ffffff;font-weight:bold;font-family:'Liberation Sans', sans-serif;transform:scaleY(1.06);transform-origin:0 9.06px;left:1215.80px;">Order Book</div>
<div class="r" style="left:1198px;top:60px;width:202px;height:1px;background:#23252b;"></div>
<div class="t" style="top:67.23px;font-size:8.7px;color:#ffffff;font-weight:bold;font-family:'Liberation Mono', monospace;transform:scaleY(1.1);transform-origin:0 6.67px;right:126.20px;text-align:right;">SIZE (ETH)</div>
<div class="t" style="top:67.23px;font-size:8.7px;color:#ffffff;font-weight:bold;font-family:'Liberation Mono', monospace;transform:scaleY(1.1);transform-origin:0 6.67px;right:38.40px;text-align:right;">PRICE (DAI)</div>
<div class="t" style="top:81.08px;font-size:7.2px;color:#f0f0f0;font-weight:bold;font-family:'Liberation Mono', monospace;transform:scaleY(1.1);transform-origin:0 5.52px;right:126.20px;text-align:right;">10.0000</div>
<div class="t" style="top:81.08px;font-size:7.2px;color:#ee5757;font-weight:bold;font-family:'Liberation Mono', monospace;transform:scaleY(1.1);transform-origin:0 5.52px;right:38.40px;text-align:right;">182.32</div>
<div class="t" style="top:94.24px;font-size:7.2px;color:#f0f0f0;font-weight:bold;font-family:'Liberation Mono', monospace;transform:scaleY(1.1);transform-origin:0 5.52px;right:126.20px;text-align:right;">1.0000</div>
<div class="t" style="top:94.24px;font-size:7.2px;color:#ee5757;font-weight:bold;font-family:'Liberation Mono', monospace;transform:scaleY(1.1);transform-origin:0 5.52px;right:38.40px;text-align:right;">182.00</div>
<div class="t" style="top:107.40px;font-size:7.2px;color:#f0f0f0;font-weight:bold;font-family:'Liberation Mono', monospace;transform:scaleY(1.1);transform-origin:0 5.52px;right:126.20px;text-align:right;">40.0000</div>
<div class="t" style="top:107.40px;font-size:7.2px;color:#ee5757;font-weight:bold;font-family:'Liberation Mono', monospace;transform:scaleY(1.1);transform-origin:0 5.52px;right:38.40px;text-align:right;">181.73</div>
<div class="t" style="top:120.56px;font-size:7.2px;color:#f0f0f0;font-weight:bold;font-family:'Liberation Mono', monospace;transform:scaleY(1.1);transform-origin:0 5.52px;right:126.20px;text-align:right;">61.0500</div>
<div class="t" style="top:120.56px;font-size:7.2px;color:#ee5757;font-weight:bold;font-family:'Liberation Mono', monospace;transform:scaleY(1.1);transform-origin:0 5.52px;right:38.40px;text-align:right;">181.49</div>
<div class="t" style="top:133.72px;font-size:7.2px;color:#f0f0f0;font-weight:bold;font-family:'Liberation Mono', monospace;transform:scaleY(1.1);transform-origin:0 5.52px;right:126.20px;text-align:right;">60.0000</div>
<div class="t" style="top:133.72px;font-size:7.2px;color:#ee5757;font-weight:bold;font-family:'Liberation Mono', monospace;transform:scaleY(1.1);transform-origin:0 5.52px;right:38.40px;text-align:right;">181.48</div>
<div class="t" style="top:146.88px;font-size:7.2px;color:#f0f0f0;font-weight:bold;font-family:'Liberation Mono', monospace;transform:scaleY(1.1);transform-origin:0 5.52px;right:126.20px;text-align:right;">50.0000</div>
<div class="t" style="top:146.88px;font-size:7.2px;color:#ee5757;font-weight:bold;font-family:'Liberation Mono', monospace;transform:scaleY(1.1);transform-origin:0 5.52px;right:38.40px;text-align:right;">181.39</div>
<div class="t" style="top:160.04px;font-size:7.2px;color:#f0f0f0;font-weight:bold;font-family:'Liberation Mono', monospace;transform:scaleY(1.1);transform-origin:0 5.52px;right:126.20px;text-align:right;">50.0000</div>
<div class="t" style="top:160.04px;font-size:7.2px;color:#ee5757;font-weight:bold;font-family:'Liberation Mono', monospace;transform:scaleY(1.1);transform-origin:0 5.52px;right:38.40px;text-align:right;">181.38</div>
<div class="t" style="top:173.20px;font-size:7.2px;color:#f0f0f0;font-weight:bold;font-family:'Liberation Mono', monospace;transform:scaleY(1.1);transform-origin:0 5.52px;right:126.20px;text-align:right;">49.0556</div>
<div class="t" style="top:173.20px;font-size:7.2px;color:#ee5757;font-weight:bold;font-family:'Liberation Mono', monospace;transform:scaleY(1.1);transform-origin:0 5.52px;right:38.40px;text-align:right;">181.20</div>
<div class="t" style="top:186.36px;font-size:7.2px;color:#f0f0f0;font-weight:bold;font-family:'Liberation Mono', monospace;transform:scaleY(1.1);transform-origin:0 5.52px;right:126.20px;text-align:right;">10.0000</div>
<div class="t" style="top:186.36px;font-size:7.2px;color:#ee5757;font-weight:bold;font-family:'Liberation Mono', monospace;transform:scaleY(1.1);transform-origin:0 5.52px;right:38.40px;text-align:right;">181.06</div>
<div class="t" style="top:199.52px;font-size:7.2px;color:#f0f0f0;font-weight:bold;font-family:'Liberation Mono', monospace;transform:scaleY(1.1);transform-origin:0 5.52px;right:126.20px;text-align:right;">49.9987</div>
<div class="t" style="top:199.52px;font-size:7.2px;color:#ee5757;font-weight:bold;font-family:'Liberation Mono', monospace;transform:scaleY(1.1);transform-origin:0 5.52px;right:38.40px;text-align:right;">180.83</div>
<div class="t" style="top:212.68px;font-size:7.2px;color:#f0f0f0;font-weight:bold;font-family:'Liberation Mono', monospace;transform:scaleY(1.1);transform-origin:0 5.52px;right:126.20px;text-align:right;">1.0033</div>
<div class="t" style="top:212.68px;font-size:7.2px;color:#ee5757;font-weight:bold;font-family:'Liberation Mono', monospace;transform:scaleY(1.1);transform-origin:0 5.52px;right:38.40px;text-align:right;">180.82</div>
<div class="t" style="top:225.84px;font-size:7.2px;color:#f0f0f0;font-weight:bold;font-family:'Liberation Mono', monospace;transform:scaleY(1.1);transform-origin:0 5.52px;right:126.20px;text-align:right;">0.2130</div>
<div class="t" style="top:225.84px;font-size:7.2px;color:#ee5757;font-weight:bold;font-family:'Liberation Mono', monospace;transform:scaleY(1.1);transform-origin:0 5.52px;right:38.40px;text-align:right;">180.77</div>
<div class="t" style="top:239.00px;font-size:7.2px;color:#f0f0f0;font-weight:bold;font-family:'Liberation Mono', monospace;transform:scaleY(1.1);transform-origin:0 5.52px;right:126.20px;text-align:right;">19.8668</div>
<div class="t" style="top:239.00px;font-size:7.2px;color:#ee5757;font-weight:bold;font-family:'Liberation Mono', monospace;transform:scaleY(1.1);transform-origin:0 5.52px;right:38.40px;text-align:right;">180.76</div>
<div class="t" style="top:252.16px;font-size:7.2px;color:#f0f0f0;font-weight:bold;font-family:'Liberation Mono', monospace;transform:scaleY(1.1);transform-origin:0 5.52px;right:126.20px;text-align:right;">61.0000</div>
<div class="t" style="top:252.16px;font-size:7.2px;color:#ee5757;font-weight:bold;font-family:'Liberation Mono', monospace;transform:scaleY(1.1);transform-origin:0 5.52px;right:38.40px;text-align:right;">180.74</div>
<div class="t" style="top:265.32px;font-size:7.2px;color:#f0f0f0;font-weight:bold;font-family:'Liberation Mono', monospace;transform:scaleY(1.1);transform-origin:0 5.52px;right:126.20px;text-align:right;">100.0000</div>
<div class="t" style="top:265.32px;font-size:7.2px;color:#ee5757;font-weight:bold;font-family:'Liberation Mono', monospace;transform:scaleY(1.1);transform-origin:0 5.52px;right:38.40px;text-align:right;">180.73</div>
<div class="t" style="top:278.48px;font-size:7.2px;color:#f0f0f0;font-weight:bold;font-family:'Liberation Mono', monospace;transform:scaleY(1.1);transform-origin:0 5.52px;right:126.20px;text-align:right;">20.0000</div>
<div class="t" style="top:278.48px;font-size:7.2px;color:#ee5757;font-weight:bold;font-family:'Liberation Mono', monospace;transform:scaleY(1.1);transform-origin:0 5.52px;right:38.40px;text-align:right;">180.59</div>
<div class="t" style="top:291.64px;font-size:7.2px;color:#f0f0f0;font-weight:bold;font-family:'Liberation Mono', monospace;transform:scaleY(1.1);transform-origin:0 5.52px;right:126.20px;text-align:right;">20.0000</div>
<div class="t" style="top:291.64px;font-size:7.2px;color:#ee5757;font-weight:bold;font-family:'Liberation Mono', monospace;transform:scaleY(1.1);transform-origin:0 5.52px;right:38.40px;text-align:right;">180.58</div>
<div class="t" style="top:304.80px;font-size:7.2px;color:#f0f0f0;font-weight:bold;font-family:'Liberation Mono', monospace;transform:scaleY(1.1);transform-origin:0 5.52px;right:126.20px;text-align:right;">25.0000</div>
<div class="t" style="top:304.80px;font-size:7.2px;color:#ee5757;font-weight:bold;font-family:'Liberation Mono', monospace;transform:scaleY(1.1);transform-origin:0 5.52px;right:38.40px;text-align:right;">180.24</div>
<div class="t" style="top:317.96px;font-size:7.2px;color:#f0f0f0;font-weight:bold;font-family:'Liberation Mono', monospace;transform:scaleY(1.1);transform-origin:0 5.52px;right:126.20px;text-align:right;">105.5560</div>
<div class="t" style="top:317.96px;font-size:7.2px;color:#ee5757;font-weight:bold;font-family:'Liberation Mono', monospace;transform:scaleY(1.1);transform-origin:0 5.52px;right:38.40px;text-align:right;">180.00</div>
<div class="t" style="top:331.12px;font-size:7.2px;color:#f0f0f0;font-weight:bold;font-family:'Liberation Mono', monospace;transform:scaleY(1.1);transform-origin:0 5.52px;right:126.20px;text-align:right;">67.4300</div>
<div class="t" style="top:331.12px;font-size:7.2px;color:#ee5757;font-weight:bold;font-family:'Liberation Mono', monospace;transform:scaleY(1.1);transform-origin:0 5.52px;right:38.40px;text-align:right;">179.88</div>
<div class="t" style="top:344.28px;font-size:7.2px;color:#f0f0f0;font-weight:bold;font-family:'Liberation Mono', monospace;transform:scaleY(1.1);transform-origin:0 5.52px;right:126.20px;text-align:right;">30.0000</div>
<div class="t" style="top:344.28px;font-size:7.2px;color:#ee5757;font-weight:bold;font-family:'Liberation Mono', monospace;transform:scaleY(1.1);transform-origin:0 5.52px;right:38.40px;text-align:right;">179.86</div>
<div class="t" style="top:357.44px;font-size:7.2px;color:#f0f0f0;font-weight:bold;font-family:'Liberation Mono', monospace;transform:scaleY(1.1);transform-origin:0 5.52px;right:126.20px;text-align:right;">3.9743</div>
<div class="t" style="top:357.44px;font-size:7.2px;color:#ee5757;font-weight:bold;font-family:'Liberation Mono', monospace;transform:scaleY(1.1);transform-origin:0 5.52px;right:38.40px;text-align:right;">179.60</div>
<div class="t" style="top:370.60px;font-size:7.2px;color:#f0f0f0;font-weight:bold;font-family:'Liberation Mono', monospace;transform:scaleY(1.1);transform-origin:0 5.52px;right:126.20px;text-align:right;">21.0000</div>
<div class="t" style="top:370.60px;font-size:7.2px;color:#ee5757;font-weight:bold;font-family:'Liberation Mono', monospace;transform:scaleY(1.1);transform-origin:0 5.52px;right:38.40px;text-align:right;">179.59</div>
<div class="t" style="top:383.76px;font-size:7.2px;color:#f0f0f0;font-weight:bold;font-family:'Liberation Mono', monospace;transform:scaleY(1.1);transform-origin:0 5.52px;right:126.20px;text-align:right;">28.0000</div>
<div class="t" style="top:383.76px;font-size:7.2px;color:#ee5757;font-weight:bold;font-family:'Liberation Mono', monospace;transform:scaleY(1.1);transform-origin:0 5.52px;right:38.40px;text-align:right;">179.50</div>
<div class="r" style="left:1211px;top:396px;width:179px;height:17px;background:#151619;"></div>
<div class="t" style="top:401.01px;font-size:7.3px;color:#ffffff;font-weight:bold;font-family:'Liberation Mono', monospace;transform:scaleY(1.1);transform-origin:0 5.59px;right:126.20px;text-align:right;">DAI SPREAD</div>
<div class="t" style="top:401.01px;font-size:7.3px;color:#ffffff;font-weight:bold;font-family:'Liberation Mono', monospace;transform:scaleY(1.1);transform-origin:0 5.59px;right:38.40px;text-align:right;">1.67</div>
<div class="t" style="top:420.18px;font-size:7.2px;color:#f0f0f0;font-weight:bold;font-family:'Liberation Mono', monospace;transform:scaleY(1.1);transform-origin:0 5.52px;right:126.20px;text-align:right;">10.0000</div>
<div class="t" style="top:420.18px;font-size:7.2px;color:#50e650;font-weight:bold;font-family:'Liberation Mono', monospace;transform:scaleY(1.1);transform-origin:0 5.52px;right:38.40px;text-align:right;">177.83</div>
<div class="t" style="top:433.35px;font-size:7.2px;color:#f0f0f0;font-weight:bold;font-family:'Liberation Mono', monospace;transform:scaleY(1.1);transform-origin:0 5.52px;right:126.20px;text-align:right;">10.0000</div>
<div class="t" style="top:433.35px;font-size:7.2px;color:#50e650;font-weight:bold;font-family:'Liberation Mono', monospace;transform:scaleY(1.1);transform-origin:0 5.52px;right:38.40px;text-align:right;">177.55</div>
<div class="t" style="top:446.52px;font-size:7.2px;color:#f0f0f0;font-weight:bold;font-family:'Liberation Mono', monospace;transform:scaleY(1.1);transform-origin:0 5.52px;right:126.20px;text-align:right;">50.1828</div>
<div class="t" style="top:446.52px;font-size:7.2px;color:#50e650;font-weight:bold;font-family:'Liberation Mono', monospace;transform:scaleY(1.1);transform-origin:0 5.52px;right:38.40px;text-align:right;">177.13</div>
<div class="t" style="top:459.69px;font-size:7.2px;color:#f0f0f0;font-weight:bold;font-family:'Liberation Mono', monospace;transform:scaleY(1.1);transform-origin:0 5.52px;right:126.20px;text-align:right;">100.0000</div>
<div class="t" style="top:459.69px;font-size:7.2px;color:#50e650;font-weight:bold;font-family:'Liberation Mono', monospace;transform:scaleY(1.1);transform-origin:0 5.52px;right:38.40px;text-align:right;">177.00</div>
<div class="t" style="top:472.86px;font-size:7.2px;color:#f0f0f0;font-weight:bold;font-family:'Liberation Mono', monospace;transform:scaleY(1.1);transform-origin:0 5.52px;right:126.20px;text-align:right;">61.1011</div>
<div class="t" style="top:472.86px;font-size:7.2px;color:#50e650;font-weight:bold;font-family:'Liberation Mono', monospace;transform:scaleY(1.1);transform-origin:0 5.52px;right:38.40px;text-align:right;">176.55</div>
<div class="t" style="top:486.03px;font-size:7.2px;color:#f0f0f0;font-weight:bold;font-family:'Liberation Mono', monospace;transform:scaleY(1.1);transform-origin:0 5.52px;right:126.20px;text-align:right;">18.8989</div>
<div class="t" style="top:486.03px;font-size:7.2px;color:#50e650;font-weight:bold;font-family:'Liberation Mono', monospace;transform:scaleY(1.1);transform-origin:0 5.52px;right:38.40px;text-align:right;">176.37</div>
<div class="t" style="top:499.20px;font-size:7.2px;color:#f0f0f0;font-weight:bold;font-family:'Liberation Mono', monospace;transform:scaleY(1.1);transform-origin:0 5.52px;right:126.20px;text-align:right;">46.6166</div>
<div class="t" style="top:499.20px;font-size:7.2px;color:#50e650;font-weight:bold;font-family:'Liberation Mono', monospace;transform:scaleY(1.1);transform-origin:0 5.52px;right:38.40px;text-align:right;">176.34</div>
<div class="t" style="top:512.37px;font-size:7.2px;color:#f0f0f0;font-weight:bold;font-family:'Liberation Mono', monospace;transform:scaleY(1.1);transform-origin:0 5.52px;right:126.20px;text-align:right;">81.9501</div>
<div class="t" style="top:512.37px;font-size:7.2px;color:#50e650;font-weight:bold;font-family:'Liberation Mono', monospace;transform:scaleY(1.1);transform-origin:0 5.52px;right:38.40px;text-align:right;">175.72</div>
<div class="t" style="top:525.54px;font-size:7.2px;color:#f0f0f0;font-weight:bold;font-family:'Liberation Mono', monospace;transform:scaleY(1.1);transform-origin:0 5.52px;right:126.20px;text-align:right;">0.4098</div>
<div class="t" style="top:525.54px;font-size:7.2px;color:#50e650;font-weight:bold;font-family:'Liberation Mono', monospace;transform:scaleY(1.1);transform-origin:0 5.52px;right:38.40px;text-align:right;">175.69</div>
<div class="t" style="top:538.71px;font-size:7.2px;color:#f0f0f0;font-weight:bold;font-family:'Liberation Mono', monospace;transform:scaleY(1.1);transform-origin:0 5.52px;right:126.20px;text-align:right;">60.0000</div>
<div class="t" style="top:538.71px;font-size:7.2px;color:#50e650;font-weight:bold;font-family:'Liberation Mono', monospace;transform:scaleY(1.1);transform-origin:0 5.52px;right:38.40px;text-align:right;">174.75</div>
<div class="t" style="top:551.88px;font-size:7.2px;color:#f0f0f0;font-weight:bold;font-family:'Liberation Mono', monospace;transform:scaleY(1.1);transform-origin:0 5.52px;right:126.20px;text-align:right;">10.0000</div>
<div class="t" style="top:551.88px;font-size:7.2px;color:#50e650;font-weight:bold;font-family:'Liberation Mono', monospace;transform:scaleY(1.1);transform-origin:0 5.52px;right:38.40px;text-align:right;">174.72</div>
<div class="t" style="top:565.05px;font-size:7.2px;color:#f0f0f0;font-weight:bold;font-family:'Liberation Mono', monospace;transform:scaleY(1.1);transform-origin:0 5.52px;right:126.20px;text-align:right;">10.0000</div>
<div class="t" style="top:565.05px;font-size:7.2px;color:#50e650;font-weight:bold;font-family:'Liberation Mono', monospace;transform:scaleY(1.1);transform-origin:0 5.52px;right:38.40px;text-align:right;">174.65</div>
<div class="t" style="top:578.22px;font-size:7.2px;color:#f0f0f0;font-weight:bold;font-family:'Liberation Mono', monospace;transform:scaleY(1.1);transform-origin:0 5.52px;right:126.20px;text-align:right;">0.4124</div>
<div class="t" style="top:578.22px;font-size:7.2px;color:#50e650;font-weight:bold;font-family:'Liberation Mono', monospace;transform:scaleY(1.1);transform-origin:0 5.52px;right:38.40px;text-align:right;">174.57</div>
<div class="t" style="top:591.39px;font-size:7.2px;color:#f0f0f0;font-weight:bold;font-family:'Liberation Mono', monospace;transform:scaleY(1.1);transform-origin:0 5.52px;right:126.20px;text-align:right;">40.0000</div>
<div class="t" style="top:591.39px;font-size:7.2px;color:#50e650;font-weight:bold;font-family:'Liberation Mono', monospace;transform:scaleY(1.1);transform-origin:0 5.52px;right:38.40px;text-align:right;">173.75</div>
<div class="t" style="top:604.56px;font-size:7.2px;color:#f0f0f0;font-weight:bold;font-family:'Liberation Mono', monospace;transform:scaleY(1.1);transform-origin:0 5.52px;right:126.20px;text-align:right;">10.0000</div>
<div class="t" style="top:604.56px;font-size:7.2px;color:#50e650;font-weight:bold;font-family:'Liberation Mono', monospace;transform:scaleY(1.1);transform-origin:0 5.52px;right:38.40px;text-align:right;">173.53</div>
<div class="t" style="top:617.73px;font-size:7.2px;color:#f0f0f0;font-weight:bold;font-family:'Liberation Mono', monospace;transform:scaleY(1.1);transform-origin:0 5.52px;right:126.20px;text-align:right;">83.0395</div>
<div class="t" style="top:617.73px;font-size:7.2px;color:#50e650;font-weight:bold;font-family:'Liberation Mono', monospace;transform:scaleY(1.1);transform-origin:0 5.52px;right:38.40px;text-align:right;">173.41</div>
<div class="t" style="top:630.90px;font-size:7.2px;color:#f0f0f0;font-weight:bold;font-family:'Liberation Mono', monospace;transform:scaleY(1.1);transform-origin:0 5.52px;right:126.20px;text-align:right;">0.4154</div>
<div class="t" style="top:630.90px;font-size:7.2px;color:#50e650;font-weight:bold;font-family:'Liberation Mono', monospace;transform:scaleY(1.1);transform-origin:0 5.52px;right:38.40px;text-align:right;">173.32</div>
<div class="t" style="top:644.07px;font-size:7.2px;color:#f0f0f0;font-weight:bold;font-family:'Liberation Mono', monospace;transform:scaleY(1.1);transform-origin:0 5.52px;right:126.20px;text-align:right;">10.0000</div>
<div class="t" style="top:644.07px;font-size:7.2px;color:#50e650;font-weight:bold;font-family:'Liberation Mono', monospace;transform:scaleY(1.1);transform-origin:0 5.52px;right:38.40px;text-align:right;">173.11</div>
<div class="t" style="top:657.24px;font-size:7.2px;color:#f0f0f0;font-weight:bold;font-family:'Liberation Mono', monospace;transform:scaleY(1.1);transform-origin:0 5.52px;right:126.20px;text-align:right;">30.0000</div>
<div class="t" style="top:657.24px;font-size:7.2px;color:#50e650;font-weight:bold;font-family:'Liberation Mono', monospace;transform:scaleY(1.1);transform-origin:0 5.52px;right:38.40px;text-align:right;">172.57</div>
<div class="t" style="top:6.18px;font-size:8.65px;color:#ffffff;font-weight:bold;font-family:'Liberation Sans', sans-serif;transform:scaleY(1.06);transform-origin:0 7.32px;left:1261.70px;">MetaMask 0x8239...Cd8e</div>
<div class="t" style="top:16.38px;font-size:7px;color:#3fcf43;font-weight:bold;font-family:'Liberation Sans', sans-serif;transform:scaleY(1.06);transform-origin:0 5.92px;left:1261.70px;">Connected</div>
</div>
<svg width="1400" height="665" viewBox="0 0 1400 665">
<g fill="none" stroke="#e8e8e8" stroke-width="1.1" stroke-linecap="round">
<circle cx="88.4" cy="18.1" r="3.6"/>
<path d="M91.10000000000001,10.7 Q88.9,9.9 86.60000000000001,10.3 Q85.2,11.2 88.60000000000001,13.6 Q89.9,14.2 90.60000000000001,14.9"/>
<circle cx="115.9" cy="18.1" r="3.6"/>
<path d="M118.60000000000001,10.7 Q116.4,9.9 114.10000000000001,10.3 Q112.7,11.2 116.10000000000001,13.6 Q117.4,14.2 118.10000000000001,14.9"/>
<path d="M94.3,10.3 L97.9,15.6 L101.5,10.3 M97.9,15.6 V21.8"/>
<path d="M101.3,26.4 L112.4,4.5"/>
<path d="M122.2,10.3 L129.4,21.8 M129.4,10.3 L122.2,21.8"/>
</g>
<g fill="none" stroke="#9a9fb5" stroke-width="1.2" stroke-linecap="round" stroke-linejoin="round">
<path d="M447.2,12.6 H445.3 Q444.4,12.6 444.4,13.5 V17 Q444.4,17.9 445.3,17.9 H448.8 Q449.7,17.9 449.7,17 V15.2"/>
<path d="M446.9,15.4 L450.3,12"/>
</g><path d="M448.2,11.1 L451.3,10.8 L451,13.9 Z" fill="#9a9fb5"/>
<g fill="#ffffff"><path d="M1178.9,17 V13.3 A3.3,3.4 0 0 1 1185.5,13.3 V17" fill="none" stroke="#fff" stroke-width="1.9"/>
<path d="M1176.2,16.6 H1188 Q1188.4,17.3 1188,18 H1176.2 Q1175.8,17.3 1176.2,16.6 Z"/>
<path d="M1180.4,19 H1183.8 A1.7,1.8 0 0 1 1180.4,19 Z"/></g>
<path d="M1209.8,7.8 H1218.9 Q1220.4,7.8 1220.4,9.3 V21.5 L1217.8,20.2 H1209.8 Q1208.3,20.2 1208.3,18.7 V9.3 Q1208.3,7.8 1209.8,7.8 Z" fill="#ffffff"/>
<path d="M1210.3,16.3 Q1214.4,18.9 1218.4,16.3" fill="none" stroke="#2a2b30" stroke-width="1.2" stroke-linecap="round"/>
<path d="M1243.8,8.2 L1248.3,11.2 L1251.2,11.3 L1255.9,9.2 L1255.6,14.5 L1254.8,19.8 L1252,21.1 L1247.5,21.3 L1244.3,20.6 L1243.1,16.5 L1243.5,12.5 Z" fill="#f5891f"/>
<path d="M1244.2,9 L1248.2,11.6 L1248.8,14.2 L1246.5,14.6 L1244.3,13 Z" fill="#a9531a"/>
<path d="M1255.4,9.8 L1251.5,11.9 L1251.2,14.3 L1253.6,14.6 L1255.3,13 Z" fill="#a9531a"/>
<path d="M1243.6,15.5 L1248.5,17.2 L1247.5,19.5 L1244,18.8 Z" fill="#f9a33a"/>
<path d="M1248.2,19.6 L1252.3,18.9 L1254.4,19.6 L1252,21.1 L1248.5,21 Z" fill="#ececec"/>
<path d="M1252.6,18.8 L1254.5,18.2 L1254.5,19.6 Z" fill="#222"/>
<circle cx="1249.4" cy="16.6" r="0.55" fill="#6a4020"/><circle cx="1252.5" cy="16.6" r="0.55" fill="#6a4020"/>
<path d="M1383.4,12.6 L1387.6,16.3 L1391.8,12.6" fill="none" stroke="#fff" stroke-width="1.6" stroke-linecap="round" stroke-linejoin="round"/>
<path d="M145.9,85.6 H149.6" stroke="#ee5757" stroke-width="1"/><path d="M148.4,84.0 L151,85.6 L148.4,87.19999999999999 Z" fill="#ee5757"/>
<path d="M145.9,166.3 H149.6" stroke="#ee5757" stroke-width="1"/><path d="M148.4,164.70000000000002 L151,166.3 L148.4,167.9 Z" fill="#ee5757"/>
</svg>
</body></html>
